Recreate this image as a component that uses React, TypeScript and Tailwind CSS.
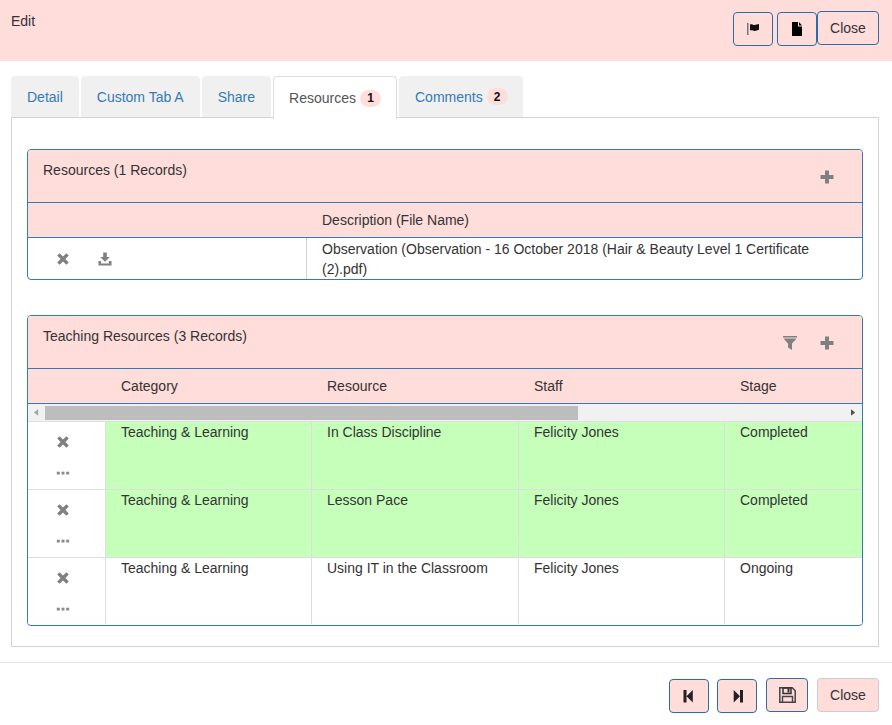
const Cross = ({ className = "" }: { className?: string }) => (
  <svg viewBox="0 0 14 14" className={`w-[14px] h-[14px] ${className}`}>
    <path d="M3.600 1.200 7 4.600l3.400-3.400 2.400 2.400L9.400 7l3.400 3.400-2.400 2.400L7 9.400l-3.400 3.400-2.400-2.400L4.600 7 1.200 3.600z" fill="#808080" />
  </svg>
);
const Plus = () => (
  <svg viewBox="0 0 14 14" className="w-[14px] h-[14px]">
    <path d="M5 .5h4v4.500h4.500v4H9v4.500H5V9H.5V5H5z" fill="#808080" />
  </svg>
);
const Filter = () => (
  <svg viewBox="0 0 14 14" className="w-[14px] h-[14px]">
    <path d="M0 0h14v1.500H0zM.5 2.500h13L9 7.500v6.500l-4-2.500v-4z" fill="#808080" />
  </svg>
);
const Download = () => (
  <svg viewBox="0 0 14 14" className="w-[14px] h-[14px]">
    <path d="M5.200 .5h3.600v4.500h3L7 9.800 2.200 5h3zM.500 9h2.500v2.500h8V9h2.500v4.500H.500z" fill="#808080" />
  </svg>
);
const Dots = () => (
  <svg viewBox="0 0 14 4" className="w-[14px] h-[4px]">
    <rect x="0.800" y="0.700" width="3" height="2.800" fill="#8a8a8a" />
    <rect x="5.500" y="0.700" width="3" height="2.800" fill="#8a8a8a" />
    <rect x="10.200" y="0.700" width="3" height="2.800" fill="#8a8a8a" />
  </svg>
);
const FlagIcon = () => (
  <svg viewBox="0 0 14 14" className="w-[14px] h-[14px]">
    <rect x="1" y="1" width="1.500" height="12" fill="#777" />
    <path d="M4 2.500c1.800-1 3.200.5 4.600.4 1.500-.1 2.800-.6 4.400-.9v5.800c-1.500.5-2.800 1-4.400 1.100-1.400.1-2.800-1.300-4.600-.4z" fill="#111" />
  </svg>
);
const FileIcon = () => (
  <svg viewBox="0 0 14 14" className="w-[14px] h-[14px]">
    <path d="M2 0h6v4.500h4V14H2zM9 0l3 3.500H9z" fill="#000" />
  </svg>
);
const StepBack = () => (
  <svg viewBox="0 0 14 14" className="w-[14px] h-[14px]">
    <path d="M1.500 1h3v12.500h-3zM4.500 7.250 10.800 1v12.500z" fill="#222" />
  </svg>
);
const StepForward = () => (
  <svg viewBox="0 0 14 14" className="w-[14px] h-[14px]">
    <path d="M13 1h-3v12.500h3zM10 7.250 3.700 1v12.500z" fill="#222" />
  </svg>
);
const Floppy = () => (
  <svg viewBox="0 0 17 16" className="w-[17px] h-[16px]">
    <path d="M.8.8h12.400l3 3v11.400H.8z" fill="none" stroke="#444" strokeWidth="1.500" />
    <path d="M4 1h8v5.500H4z" fill="none" stroke="#333" strokeWidth="1.500" />
    <rect x="8.500" y="2" width="2" height="3.500" fill="#333" />
    <path d="M3.500 15V9.500h10V15" fill="none" stroke="#444" strokeWidth="1.400" />
  </svg>
);

const iconBtn =
  "flex items-center justify-center w-10 h-[34px] rounded-[4px] border border-[#2e6da4] bg-[#ffdddb]";
const closeBtn =
  "flex items-center justify-center w-[62px] h-[34px] rounded-[4px] border bg-[#ffdddb] text-[14px] text-[#333]";
const gridCols = "grid grid-cols-[78px_206px_207px_206px_140px]";

const Tab = ({ label, active, badge }: { label: string; active?: boolean; badge?: string }) => (
  <div
    className={`flex items-center rounded-t-[4px] ${
      active
        ? "relative z-10 h-[43px] px-[15px] bg-white border border-[#ddd] border-b-0 text-[#555]"
        : "h-[41px] px-[16px] bg-[#f0f0f0] text-[#337ab7]"
    }`}
  >
    {label}
    {badge && (
      <span
        className={`ml-[4px] flex items-center justify-center w-[21px] h-[17px] rounded-full bg-[#ffdddb] text-[12px] font-bold text-[#111] ${
          active ? "" : "mr-[-1px]"
        }`}
      >
        {badge}
      </span>
    )}
  </div>
);

const PanelHead = ({ title, filter }: { title: string; filter?: boolean }) => (
  <div className="flex justify-between h-[53px] bg-[#ffdddb] border-b border-[#337ab7] pl-[15px] pr-[28px]">
    <div className="pt-[10px] leading-[20px]">{title}</div>
    <div className="flex items-start gap-[23px] pt-[20px]">
      {filter && <Filter />}
      <Plus />
    </div>
  </div>
);

const rows = [
  { r: "In Class Discipline", s: "Completed", green: true, h: "h-[68px]" },
  { r: "Lesson Pace", s: "Completed", green: true, h: "h-[68px]" },
  { r: "Using IT in the Classroom", s: "Ongoing", green: false, h: "h-[66px]" },
];

export default function App() {
  return (
    <div className="w-[892px] h-[725px] overflow-hidden bg-white font-['Liberation_Sans',sans-serif] text-[14px] leading-[20px] text-[#333]">
      <header className="flex justify-between h-[61px] bg-[#ffdddb] pl-[11px] pr-[13px]">
        <div className="pt-[11px]">Edit</div>
        <div className="flex items-start pt-[11px]">
          <div className={`${iconBtn} mt-[1px] mr-1`}>
            <FlagIcon />
          </div>
          <div className={`${iconBtn} mt-[1px]`}>
            <FileIcon />
          </div>
          <div className={`${closeBtn} border-[#2e6da4]`}>Close</div>
        </div>
      </header>

      <main className="ml-[11px] mr-[13px] mt-[15px]">
        <nav className="flex items-start gap-[2px] h-[41px]">
          <Tab label="Detail" />
          <Tab label="Custom Tab A" />
          <Tab label="Share" />
          <Tab label="Resources" badge="1" active />
          <Tab label="Comments" badge="2" />
        </nav>

        <section className="h-[530px] border border-[#d3d3d3] px-[15px] pt-[31px]">
          <div className="rounded-[4px] border border-[#337ab7] overflow-hidden h-[131px]">
            <PanelHead title="Resources (1 Records)" />
            <div className="flex h-[35px] bg-[#ffdddb] border-b border-[#337ab7] items-center pl-[294px]">
              Description (File Name)
            </div>
            <div className="flex h-[41px]">
              <div className="flex w-[279px] shrink-0 border-r border-[#d3d3d3] items-center pl-[28px] gap-[28px]">
                <Cross />
                <Download />
              </div>
              <div className="pl-[15px] pr-[40px] leading-[20px] pt-[1px]">
                Observation (Observation - 16 October 2018 (Hair &amp; Beauty Level 1 Certificate (2).pdf)
              </div>
            </div>
          </div>

          <div className="mt-[35px] rounded-[4px] border border-[#337ab7] overflow-hidden h-[311px]">
            <PanelHead title="Teaching Resources (3 Records)" filter />
            <div className={`${gridCols} h-[35px] bg-[#ffdddb] border-b border-[#337ab7] items-center`}>
              <div />
              <div className="pl-[15px]">Category</div>
              <div className="pl-[15px]">Resource</div>
              <div className="pl-[15px]">Staff</div>
              <div className="pl-[15px]">Stage</div>
            </div>
            <div className="flex items-center h-[18px] bg-[#f1f1f1] border-b border-[#e0e0e0]">
              <div className="w-[17px] flex justify-center">
                <svg viewBox="0 0 6 8" className="w-[5px] h-[7px]">
                  <path d="M5 0v8L0 4z" fill="#a3a3a3" />
                </svg>
              </div>
              <div className="w-[533px] h-[14px] bg-[#bdbdbd]" />
              <div className="flex-1 flex justify-end pr-[6px]">
                <svg viewBox="0 0 6 8" className="w-[5px] h-[7px]">
                  <path d="M0 0v8l5-4z" fill="#505050" />
                </svg>
              </div>
            </div>
            {rows.map((row) => (
              <div key={row.r} className={`${gridCols} ${row.h} border-b border-[#ddd] last:border-b-0`}>
                <div className="flex flex-col items-center bg-white border-r border-[#ddd] pt-[13px] pr-[7px]">
                  <Cross />
                  <div className="mt-[22px]">
                    <Dots />
                  </div>
                </div>
                {["Teaching & Learning", row.r, "Felicity Jones", row.s].map((t, i) => (
                  <div
                    key={i}
                    className={`pl-[15px] ${i < 3 ? "border-r border-[#ddd]" : ""} ${
                      row.green ? "bg-[#c6ffba]" : "bg-white"
                    }`}
                  >
                    {t}
                  </div>
                ))}
              </div>
            ))}
          </div>
        </section>
      </main>

      <footer className="mt-[15px] border-t border-[#e5e5e5] h-[63px] flex justify-end items-start pr-[13px]">
        <div className={`${iconBtn} mt-[16px] mr-2`}>
          <StepBack />
        </div>
        <div className={`${iconBtn} mt-[16px] mr-[9px]`}>
          <StepForward />
        </div>
        <div className={`${iconBtn} w-[42px] mt-[15px] mr-[9px]`}>
          <Floppy />
        </div>
        <div className={`${closeBtn} border-[#ccc] mt-[15px]`}>Close</div>
      </footer>
    </div>
  );
}
